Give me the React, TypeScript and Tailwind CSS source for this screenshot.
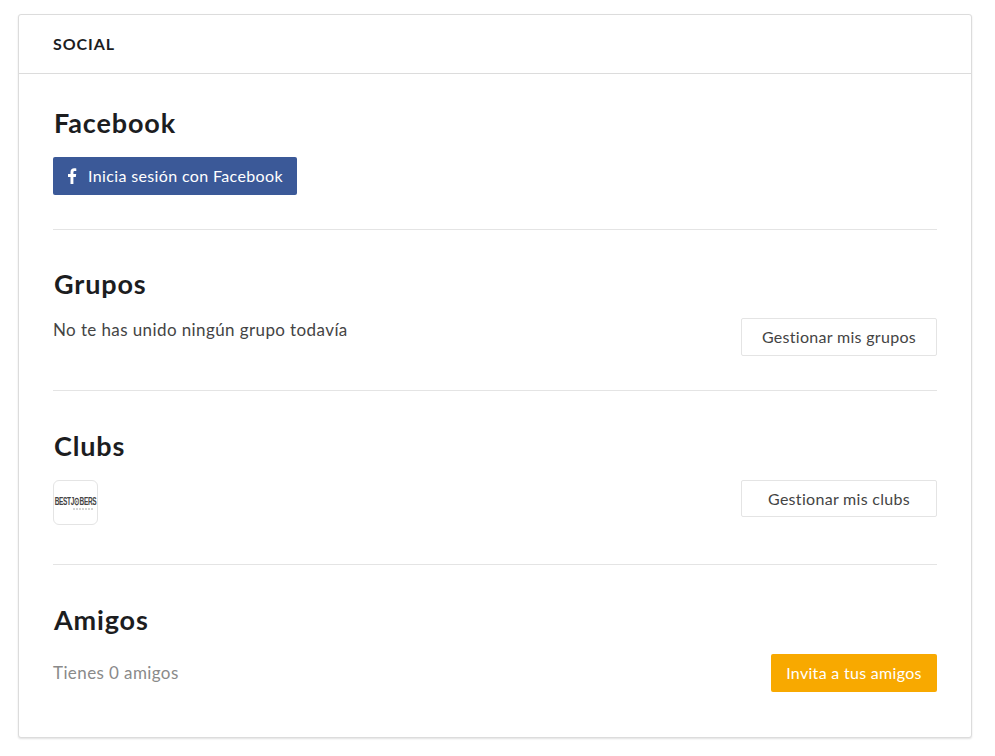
import React from 'react';

const Section: React.FC<{ title: string; last?: boolean; className: string; children: React.ReactNode }> = ({ title, last, className, children }) => (
  <section className={`${className} ${last ? '' : 'border-b border-[#e4e4e4]'}`}>
    <h2 className="pl-px text-[27px] leading-[34px] font-bold text-[#1c1d1f] tracking-[0.85px]">{title}</h2>
    {children}
  </section>
);

const OutlineButton: React.FC<{ label: string; className: string }> = ({ label, className }) => (
  <button className={`${className} w-[196px] bg-white border border-[#e4e4e4] rounded-[2px] text-[16px] tracking-[0.3px] text-[#444444]`}>
    {label}
  </button>
);

export default function App() {
  return (
    <div className="h-[756px] bg-white pt-[14px] px-[18px] font-['Lato',sans-serif]">
      <div className="w-[954px] h-[724px] bg-white border border-[#dcdcdc] rounded-[3px] shadow-[0_1px_2px_rgba(0,0,0,0.12)]">
        <header className="h-[59px] border-b border-[#dcdcdc] pl-[34px] flex items-center">
          <h1 className="text-[16px] font-bold tracking-[0.9px] text-[#1c1d1f]">SOCIAL</h1>
        </header>
        <div className="px-[34px]">
          <Section title="Facebook" className="h-[156px] pt-[32px]">
            <button className="mt-[17px] h-[38px] w-[244px] bg-[#3b5998] rounded-[2px] text-white flex items-center pl-[14px]">
              <svg width="10" height="16" viewBox="0 0 10 16" fill="currentColor">
                <path d="M6.4 16V8.9h2.4l.4-2.8H6.4V4.4c0-.8.2-1.4 1.4-1.4h1.500V.5C9 .4 8.200.3 7.200.3 5 .3 3.500 1.600 3.500 4v2.100H1v2.800h2.500V16z" />
              </svg>
              <span className="ml-[11px] text-[16px] tracking-[0.36px]">Inicia sesión con Facebook</span>
            </button>
          </Section>
          <Section title="Grupos" className="h-[161px] pt-[37px]">
            <div className="flex justify-between">
              <p className="mt-[17px] text-[17px] leading-[24px] tracking-[0.4px] text-[#444444]">No te has unido ningún grupo todavía</p>
              <OutlineButton label="Gestionar mis grupos" className="h-[38px] mt-[17px]" />
            </div>
          </Section>
          <Section title="Clubs" className="h-[174px] pt-[38px]">
            <div className="mt-[17px] flex justify-between">
              <div className="w-[45px] h-[45px] pt-[4px] border border-[#e4e4e4] rounded-[6px] flex flex-col items-center justify-center overflow-hidden">
                <span className="scale-y-[1.7] text-[6.5px] leading-none font-['Liberation_Sans',sans-serif] font-bold tracking-[-0.35px] text-[#444444] whitespace-nowrap">BESTJ⊙BERS</span>
                <svg width="20" height="2" viewBox="0 0 20 2" className="mt-[3px] ml-[14px]">
                  <path d="M0 1h20" stroke="#aaaaaa" strokeWidth="1" strokeDasharray="2 1" />
                </svg>
              </div>
              <OutlineButton label="Gestionar mis clubs" className="h-[37px]" />
            </div>
          </Section>
          <Section title="Amigos" last className="pt-[38px]">
            <div className="mt-[17px] flex justify-between items-center">
              <p className="text-[17px] tracking-[0.4px] text-[#8a8a8a]">Tienes 0 amigos</p>
              <button className="h-[38px] w-[166px] bg-[#f8a900] rounded-[2px] text-white text-[16px] tracking-[0.3px]">Invita a tus amigos</button>
            </div>
          </Section>
        </div>
      </div>
    </div>
  );
}
